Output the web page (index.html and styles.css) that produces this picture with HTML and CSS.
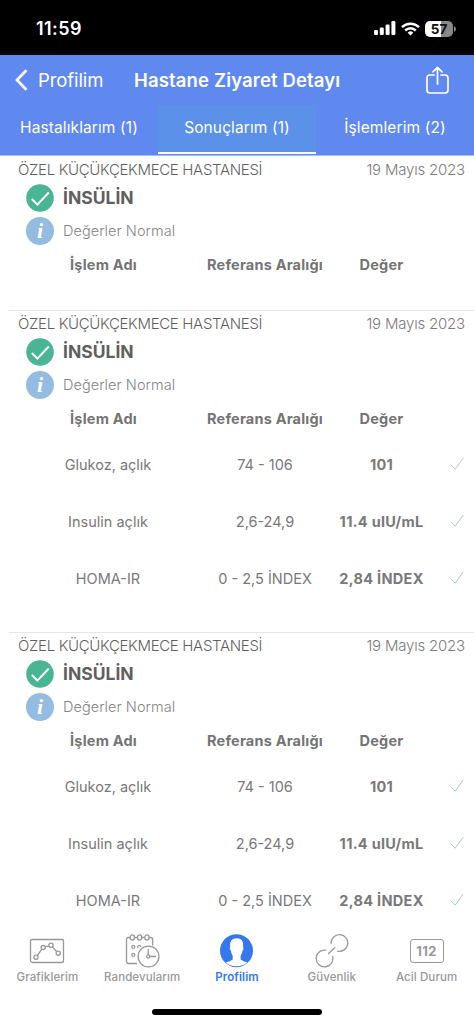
FILE: index.html
```html
<!DOCTYPE html>
<html lang="tr">
<head>
<meta charset="utf-8">
<title>Hastane Ziyaret Detayı</title>
<link rel="stylesheet" href="styles.css">
</head>
<body>
<svg class="defs" width="0" height="0">
  <symbol id="ok" viewBox="0 0 28 28"><circle cx="14" cy="14" r="13.8" fill="#4ab592"/><path d="M5.800 15l5.600 5.600L22.800 8.500" fill="none" stroke="#fff" stroke-width="2"/></symbol>
  <symbol id="tick" viewBox="0 0 14 14"><path d="M.7 7.600l4.500 4.600L13.200 1" fill="none" stroke="#8fcfb8" stroke-width=".9"/></symbol>
</svg>
<div class="status">
  <span class="time">11:59</span>
  <svg class="signal" width="22" height="14" viewBox="0 0 22 14" fill="#fff"><rect x="0" y="9" width="4" height="5" rx="1.2"/><rect x="5.8" y="6.5" width="4" height="7.5" rx="1.2"/><rect x="11.6" y="3.5" width="4" height="10.5" rx="1.2"/><rect x="17.4" y="0" width="4" height="14" rx="1.2"/></svg>
  <svg class="wifi" width="19" height="14" viewBox="0 0 19 14" fill="none" stroke="#fff" stroke-width="2.5"><path d="M1 5.2a12.2 12.2 0 0 1 17 0M4.2 8.5a7.6 7.6 0 0 1 10.6 0"/><path d="M9.500 13.500L6.700 10.700a4 4 0 0 1 5.600 0z" fill="#fff" stroke="none"/></svg>
  <span class="battery">57</span>
  <svg class="cap" width="2" height="6" viewBox="0 0 2 6"><path d="M0 0q2 1 2 3t-2 3z" fill="#888"/></svg>
</div>
<header>
  <div class="nav">
    <svg class="back" width="13" height="22" viewBox="0 0 13 22"><path d="M11.500 1.300L2 11l9.500 9.700" fill="none" stroke="#fff" stroke-width="2.700"/></svg>
    <span class="backlabel">Profilim</span>
    <span class="title">Hastane Ziyaret Detayı</span>
    <svg class="share" width="24" height="28" viewBox="0 0 24 28" fill="none" stroke="#fff" stroke-width="1.700" stroke-linecap="round" stroke-linejoin="round"><path d="M8 9H4q-3 0-3 3v12q0 3 3 3h15q3 0 3-3V12q0-3-3-3h-4M11.500 18V1.300M7 5.800l4.500-4.500L16 5.800"/></svg>
  </div>
  <nav class="tabs"><span class="tab">Hastalıklarım (1)</span><span class="tab on">Sonuçlarım (1)</span><span class="tab">İşlemlerim (2)</span></nav>
</header>
<main>
  <section class="visit">
    <div class="top"><span class="hosp">ÖZEL KÜÇÜKÇEKMECE HASTANESİ</span><span class="date">19 Mayıs 2023</span></div>
    <div class="name"><svg class="ic"><use href="#ok"/></svg><b>İNSÜLİN</b></div>
    <div class="info"><i class="ic">i</i><span>Değerler Normal</span></div>
    <div class="heads"><span>İşlem Adı</span><span>Referans Aralığı</span><span>Değer</span></div>
  </section>
  <section class="visit full">
    <div class="top"><span class="hosp">ÖZEL KÜÇÜKÇEKMECE HASTANESİ</span><span class="date">19 Mayıs 2023</span></div>
    <div class="name"><svg class="ic"><use href="#ok"/></svg><b>İNSÜLİN</b></div>
    <div class="info"><i class="ic">i</i><span>Değerler Normal</span></div>
    <div class="heads"><span>İşlem Adı</span><span>Referans Aralığı</span><span>Değer</span></div>
    <div class="row"><span>Glukoz, açlık</span><span>74 - 106</span><b>101</b><svg class="tick"><use href="#tick"/></svg></div>
    <div class="row"><span>Insulin açlık</span><span>2,6-24,9</span><b>11.4 uIU/mL</b><svg class="tick"><use href="#tick"/></svg></div>
    <div class="row"><span>HOMA-IR</span><span>0 - 2,5 İNDEX</span><b>2,84 İNDEX</b><svg class="tick"><use href="#tick"/></svg></div>
  </section>
  <section class="visit full">
    <div class="top"><span class="hosp">ÖZEL KÜÇÜKÇEKMECE HASTANESİ</span><span class="date">19 Mayıs 2023</span></div>
    <div class="name"><svg class="ic"><use href="#ok"/></svg><b>İNSÜLİN</b></div>
    <div class="info"><i class="ic">i</i><span>Değerler Normal</span></div>
    <div class="heads"><span>İşlem Adı</span><span>Referans Aralığı</span><span>Değer</span></div>
    <div class="row"><span>Glukoz, açlık</span><span>74 - 106</span><b>101</b><svg class="tick"><use href="#tick"/></svg></div>
    <div class="row"><span>Insulin açlık</span><span>2,6-24,9</span><b>11.4 uIU/mL</b><svg class="tick"><use href="#tick"/></svg></div>
    <div class="row"><span>HOMA-IR</span><span>0 - 2,5 İNDEX</span><b>2,84 İNDEX</b><svg class="tick"><use href="#tick"/></svg></div>
  </section>
</main>
<footer>
  <div class="bar">
    <div class="item"><svg width="36" height="34" viewBox="0 0 36 34"><rect x="1.500" y="5.500" width="33" height="23" rx="2"/><path d="M8.300 21.500l4.400-6.200M16.200 12.800l3.700-1M23.400 12.900l4.300 4.800"/><circle cx="7" cy="23.200" r="2.100"/><circle cx="14.200" cy="13.600" r="2.100"/><circle cx="22" cy="11.200" r="2.100"/><circle cx="29.200" cy="19.200" r="2.100"/></svg><span>Grafiklerim</span></div>
    <div class="item"><svg width="36" height="34" viewBox="0 0 36 34"><path d="M13 29.500H4.500q-2 0-2-2v-22q0-2 2-2h1.700M10.500 3.500h3M17.800 3.500h3M25 3.500h1.700q2 0 2 2v6"/><ellipse cx="8.300" cy="3.500" rx="2.100" ry="2.600"/><ellipse cx="15.600" cy="3.500" rx="2.100" ry="2.600"/><ellipse cx="22.900" cy="3.500" rx="2.100" ry="2.600"/><circle cx="9.300" cy="12.800" r="1.500"/><path d="M14.200 14a1.500 1.500 0 1 1 2.500-1.200"/><circle cx="9.300" cy="20.800" r="1.500"/><circle cx="24.500" cy="22.500" r="10.400"/><circle cx="24.200" cy="22.500" r="1.600"/><path d="M24.200 21v-6M25.800 22.500h6.300"/></svg><span>Randevularım</span></div>
    <div class="item active"><svg width="36" height="34" viewBox="0 0 36 34"><circle cx="17.500" cy="16.700" r="16.500" fill="#3478f0" stroke="none"/><path d="M6.700 28.600Q11.500 27.500 13.700 25.500V21.700Q12.200 19.700 11.800 16.800Q10.200 14.500 11.100 12.500Q10.300 4.300 17.800 4.300Q24.800 4.300 24.100 12.500Q25.200 14.500 23.500 16.800Q23.100 19.700 21.600 21.700V25.500Q24 27.500 28.500 28.600Q24.300 32.200 17.500 32.200T6.700 28.600Z" fill="#fff" stroke="none"/></svg><span>Profilim</span></div>
    <div class="item"><svg width="36" height="34" viewBox="0 0 36 34" stroke-linecap="round"><path d="M17.100 9.500A8.350 8.350 0 1 1 23.600 17.200M18.600 22.300A8.350 8.350 0 1 1 11.800 16.200"/><path d="M14.500 19.600l6.300-5.800"/></svg><span>Güvenlik</span></div>
    <div class="item"><div class="emergency"><b>112</b></div><span>Acil Durum</span></div>
  </div>
  <div class="home"></div>
</footer>
</body>
</html>
```
FILE: styles.css
```css
* { box-sizing: border-box; }
body { margin: 0; width: 474px; height: 1024px; overflow: hidden; display: flex; flex-direction: column; background: #fff; font-family: Inter, "Noto Sans", sans-serif; color: #797979; }
span, b { white-space: nowrap; }
svg, .home, .battery { flex: none; }
.defs { display: block; height: 0; position: absolute; }
.status { flex: none; height: 55px; background: #000; color: #fff; display: flex; align-items: center; padding: 2px 0 0 36px; }
.time { font-size: 18px; font-weight: 600; width: 338px; letter-spacing: .4px; }
.signal { margin-bottom: 1px; }
.wifi { margin: 0 5px; }
.battery { width: 28px; height: 16px; border-radius: 5px; background: linear-gradient(90deg, #fff 57%, #888 57%); color: #111; font-size: 13.500px; font-weight: 700; text-align: center; line-height: 16px; }
.cap { margin-left: 1px; }
header { flex: none; height: 101px; background: #5f89ef; color: #fff; border-bottom: 1px solid #a5bff6; }
.nav { height: 50px; display: flex; align-items: center; padding-left: 15px; }
.backlabel { font-size: 18.500px; margin-left: 10px; width: 96px; letter-spacing: -.1px; }
.title { flex: 0 0 292px; font-size: 18.500px; font-weight: 600; letter-spacing: .15px; }
.share { margin-bottom: 1px; }
.tabs { display: grid; grid-template-columns: 158px 158px 158px; height: 49px; }
.tab { display: flex; align-items: center; justify-content: center; font-size: 15.500px; letter-spacing: .1px; padding-bottom: 2px; border-bottom: 2px solid transparent; }
.tab.on { background: #5c91e9; border-color: #fff; }
main { flex: 1; min-height: 0; overflow: hidden; }
.visit { height: 154px; }
.visit.full { height: 322px; }
.visit + .visit { background: linear-gradient(#e6e6e6, #e6e6e6) 9px 0 / 465px 1px no-repeat; }
.top { height: 26px; display: flex; align-items: center; justify-content: space-between; padding: 0 9px 0 18px; }
.hosp { color: #5f5f5f; font-weight: 300; font-size: 15px; letter-spacing: -.33px; }
.date { color: #7c7c7c; font-weight: 300; font-size: 15px; letter-spacing: -.2px; }
.name { height: 32px; display: flex; align-items: center; padding-left: 26px; gap: 9px; font-size: 17.500px; }
.name b { color: #5f5f5f; font-weight: 700; padding-bottom: 1px; }
.ic { width: 28px; height: 28px; flex: none; }
.info { height: 34px; display: flex; align-items: center; padding-left: 26px; gap: 9px; color: #858585; font-size: 14.500px; font-weight: 300; }
.info span { padding-bottom: 2px; letter-spacing: .05px; }
.info i { border-radius: 50%; background: #94bbe0; color: #fff; font: italic bold 22px/27px "Liberation Serif", serif; text-align: center; }
.heads, .row { display: grid; justify-content: start; align-items: center; justify-items: center; font-size: 14.500px; }
.heads { height: 33px; font-weight: 700; padding: 0 0 1px 25px; color: #747474; letter-spacing: .2px; grid-template-columns: 157px 166px 67px; }
.row { height: 57px; padding: 1px 0 0 30px; grid-template-columns: 156px 158px 75px 45px; }
.row b { font-weight: 700; font-size: 14.500px; letter-spacing: .3px; }
.tick { width: 14px; height: 14px; justify-self: end; }
footer { flex: none; height: 96px; background: #fff; }
.bar { display: grid; grid-template-columns: repeat(5, 94.800px); padding-top: 6px; }
.item { display: flex; flex-direction: column; align-items: center; font-size: 11.500px; font-weight: 500; color: #999; letter-spacing: .1px; }
.item svg { fill: none; stroke: #999; stroke-width: 1.300; }
.item span { line-height: 16px; margin-top: 1px; }
.active { color: #3478f0; font-weight: 600; }
.emergency { height: 34px; padding-top: 5px; }
.emergency b { display: block; width: 34px; height: 24px; border: 1px solid #999; border-radius: 3px; line-height: 23px; text-align: center; font-size: 13px; letter-spacing: .5px; }
.home { width: 170px; height: 6px; border-radius: 3px; background: #000; margin: 24px auto 0; }
```
